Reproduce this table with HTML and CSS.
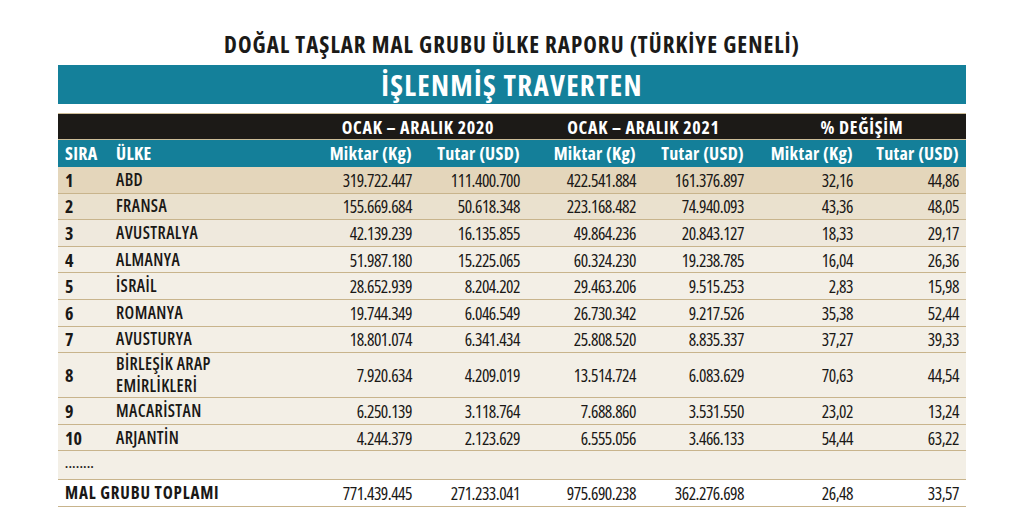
FILE: index.html
```html
<!DOCTYPE html>
<html lang="tr">
<head>
<meta charset="utf-8">
<title>Doğal Taşlar Mal Grubu Ülke Raporu</title>
<link rel="stylesheet" href="styles.css">
</head>
<body>
<div class="report">
  <h1 class="report-title">DOĞAL TAŞLAR MAL GRUBU ÜLKE RAPORU (TÜRKİYE GENELİ)</h1>
  <div class="product-bar">İŞLENMİŞ TRAVERTEN</div>
  <table class="data">
    <colgroup>
      <col class="c-sira"><col class="c-ulke"><col class="c-m20"><col class="c-t20"><col class="c-m21"><col class="c-t21"><col class="c-mp"><col class="c-tp">
    </colgroup>
    <thead>
      <tr class="group-row">
        <th></th><th></th>
        <th colspan="2" class="g-2020">OCAK – ARALIK 2020</th>
        <th colspan="2" class="g-2021">OCAK – ARALIK 2021</th>
        <th colspan="2" class="g-pct">% DEĞİŞİM</th>
      </tr>
      <tr class="col-row">
        <th class="left">SIRA</th><th class="left">ÜLKE</th>
        <th>Miktar (Kg)</th><th>Tutar (USD)</th>
        <th>Miktar (Kg)</th><th>Tutar (USD)</th>
        <th>Miktar (Kg)</th><th>Tutar (USD)</th>
      </tr>
    </thead>
    <tbody>
      <tr class="r1"><td class="no">1</td><td class="name">ABD</td><td>319.722.447</td><td>111.400.700</td><td>422.541.884</td><td>161.376.897</td><td>32,16</td><td>44,86</td></tr>
      <tr class="r2"><td class="no">2</td><td class="name">FRANSA</td><td>155.669.684</td><td>50.618.348</td><td>223.168.482</td><td>74.940.093</td><td>43,36</td><td>48,05</td></tr>
      <tr class="r3"><td class="no">3</td><td class="name">AVUSTRALYA</td><td>42.139.239</td><td>16.135.855</td><td>49.864.236</td><td>20.843.127</td><td>18,33</td><td>29,17</td></tr>
      <tr><td class="no">4</td><td class="name">ALMANYA</td><td>51.987.180</td><td>15.225.065</td><td>60.324.230</td><td>19.238.785</td><td>16,04</td><td>26,36</td></tr>
      <tr><td class="no">5</td><td class="name">İSRAİL</td><td>28.652.939</td><td>8.204.202</td><td>29.463.206</td><td>9.515.253</td><td>2,83</td><td>15,98</td></tr>
      <tr><td class="no">6</td><td class="name">ROMANYA</td><td>19.744.349</td><td>6.046.549</td><td>26.730.342</td><td>9.217.526</td><td>35,38</td><td>52,44</td></tr>
      <tr><td class="no">7</td><td class="name">AVUSTURYA</td><td>18.801.074</td><td>6.341.434</td><td>25.808.520</td><td>8.835.337</td><td>37,27</td><td>39,33</td></tr>
      <tr class="tall"><td class="no">8</td><td class="name"><span class="line">BİRLEŞİK ARAP</span><span class="line">EMİRLİKLERİ</span></td><td>7.920.634</td><td>4.209.019</td><td>13.514.724</td><td>6.083.629</td><td>70,63</td><td>44,54</td></tr>
      <tr><td class="no">9</td><td class="name">MACARİSTAN</td><td>6.250.139</td><td>3.118.764</td><td>7.688.860</td><td>3.531.550</td><td>23,02</td><td>13,24</td></tr>
      <tr><td class="no">10</td><td class="name">ARJANTİN</td><td>4.244.379</td><td>2.123.629</td><td>6.555.056</td><td>3.466.133</td><td>54,44</td><td>63,22</td></tr>
      <tr class="dots"><td colspan="2" class="more">........</td><td></td><td></td><td></td><td></td><td></td><td></td></tr>
      <tr class="total"><td colspan="2" class="total-label">MAL GRUBU TOPLAMI</td><td>771.439.445</td><td>271.233.041</td><td>975.690.238</td><td>362.276.698</td><td>26,48</td><td>33,57</td></tr>
    </tbody>
  </table>
</div>
</body>
</html>
```
FILE: styles.css
```css
* { box-sizing: border-box; }

body {
  margin: 0;
  background: #ffffff;
  font-family: "Open Sans", "Liberation Sans", sans-serif;
  font-stretch: 75%;
  color: #1d1b19;
}

.report {
  width: 908px;
  margin: 0 auto;
}

.report-title {
  margin: 0;
  padding-top: 31px;
  height: 65px;
  line-height: 26px;
  font-size: 23px;
  letter-spacing: 1px;
  font-weight: bold;
  text-align: center;
  color: #1b1a18;
}

.product-bar {
  height: 39px;
  line-height: 39px;
  background: #14809a;
  color: #ffffff;
  font-size: 29px;
  letter-spacing: 1.3px;
  font-weight: bold;
  text-align: center;
  margin-bottom: 9px;
}

.data {
  width: 908px;
  border-collapse: collapse;
  table-layout: fixed;
}

.c-sira { width: 51px; }
.c-ulke { width: 200px; }
.c-m20 { width: 110px; }
.c-t20 { width: 108px; }
.c-m21 { width: 116px; }
.c-t21 { width: 108px; }
.c-mp { width: 109px; }
.c-tp { width: 106px; }

.data th,
.data td {
  padding: 0 7px;
  white-space: nowrap;
  text-align: right;
}

.group-row th {
  height: 26px;
  background: #1c1a17;
  color: #ffffff;
  font-size: 18px;
  letter-spacing: 0.7px;
  font-weight: bold;
  text-align: center;
  border-top: 1px solid #cdbd98;
  border-bottom: 1px solid #cdbd98;
}

.group-row .g-2021 { padding-left: 16px; }
.group-row .g-pct { padding-left: 14px; }

.col-row th {
  height: 27px;
  background: #147f99;
  color: #ffffff;
  font-size: 18px;
  letter-spacing: 0.3px;
  font-weight: bold;
}

.col-row th.left { text-align: left; }

.data tbody tr {
  height: 26.6px;
  background: #f3efe6;
}

.data tbody td {
  font-size: 17.5px;
  letter-spacing: -0.5px;
  border-bottom: 1px solid #c8b48c;
  line-height: 18px;
  color: #1a1816;
}

.data tbody tr.r1 { background: #e4d6bb; }
.data tbody tr.r2 { background: #eae1ce; }
.data tbody tr.r3 { background: #efe9dd; }

.data tbody tr.tall { height: 42px; }
.data tbody tr.dots { height: 28.5px; }
.data tbody tr.total { height: 27.5px; background: #ffffff; }

.data td.no {
  text-align: left;
  font-size: 18px;
  font-weight: bold;
  letter-spacing: 0;
}

.data td.name {
  text-align: left;
  font-size: 17px;
  line-height: 20px;
  font-weight: 600;
  letter-spacing: 0.4px;
}

.data td.name .line {
  display: block;
}

.data tr.tall td.name {
  line-height: 22px;
}

.data td.more {
  text-align: left;
  font-size: 12px;
  font-weight: bold;
  vertical-align: bottom;
  padding-bottom: 6px;
  letter-spacing: 0.6px;
}

.data td.total-label {
  text-align: left;
  font-size: 17px;
  font-weight: bold;
  letter-spacing: 0.8px;
}
```
